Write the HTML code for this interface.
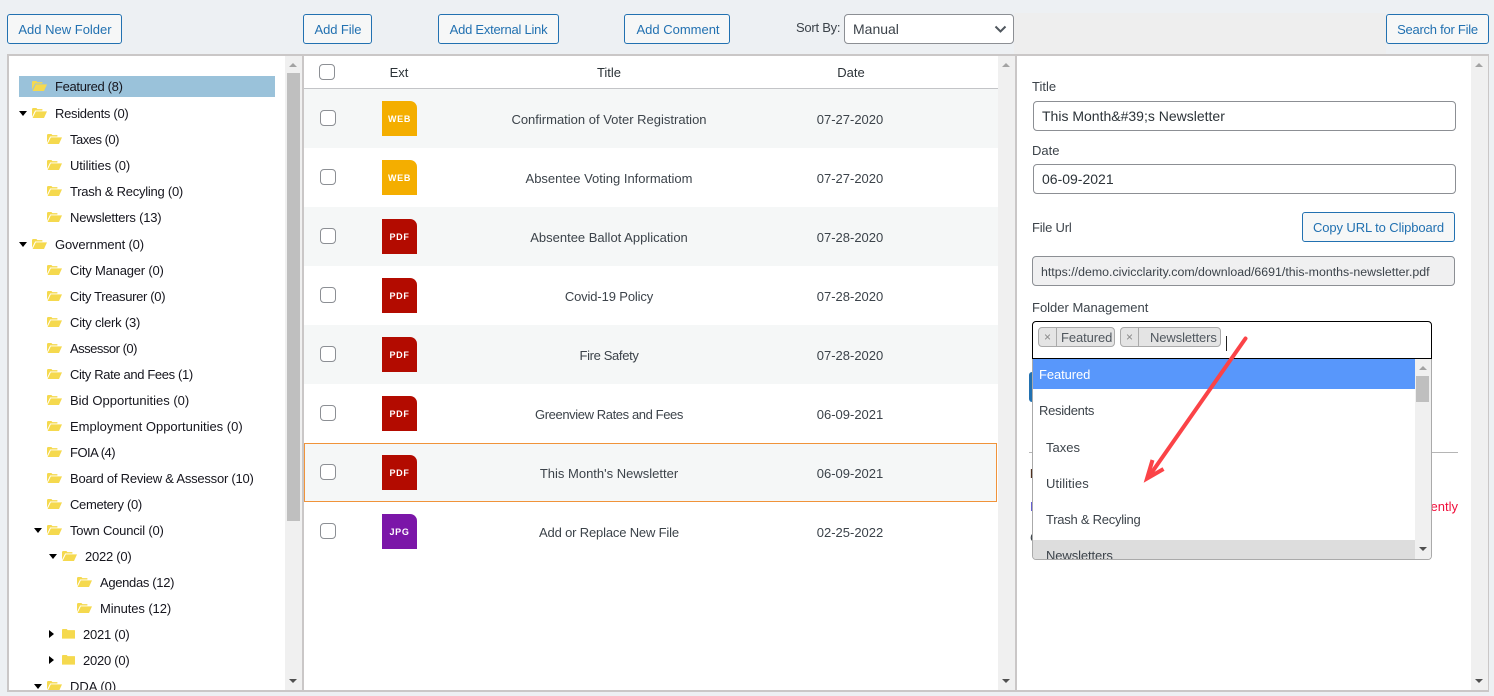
<!DOCTYPE html>
<html lang="en"><head><meta charset="utf-8"><title>File Manager</title>
<style>
html,body{margin:0;padding:0}
body{width:1494px;height:696px;position:relative;overflow:hidden;background:#edf0f3;font-family:"Liberation Sans",Arial,sans-serif;font-size:13px;color:#3c434a}
div,span,svg{position:absolute;box-sizing:border-box}
.t{white-space:nowrap;line-height:22px;height:20px}
.c{text-align:center}
.btn{height:30px;line-height:30px;border:1px solid #2271b1;border-radius:3px;background:#f6f7f7;color:#2271b1;text-align:center;white-space:nowrap}
.inp{background:#fff;border:1px solid #8c8f94;border-radius:4px;height:30px;line-height:28px;padding-left:8px;white-space:nowrap;font-size:14px}
.tree .t{color:#16161e}
.cb{width:16px;height:16px;background:#fff;border:1px solid #8c8f94;border-radius:4px}
.row{left:304px;width:694px;height:59px}
.ic{left:382px;width:35px;height:35px;border-top-right-radius:7px;color:#fff;font-weight:bold;font-size:9px;letter-spacing:.7px;line-height:37px;text-align:center}
.web{background:#f4ae00}.pdf{background:#b30b00}.jpg{background:#7b16a8}
.sb{background:#f0f0f0;width:17px}
.up{width:0;height:0;border-left:4px solid transparent;border-right:4px solid transparent;border-bottom:4px solid #a3a3a3}
.dn{width:0;height:0;border-left:4px solid transparent;border-right:4px solid transparent;border-top:4px solid #505050}
.cd{width:0;height:0;border-left:4px solid transparent;border-right:4px solid transparent;border-top:5px solid #000}
.cr{width:0;height:0;border-top:4px solid transparent;border-bottom:4px solid transparent;border-left:5px solid #000}
.f{width:15px;height:11px}
.tag{top:327px;height:20px;background:#e4e4e4;border:1px solid #aaa;border-radius:4px;color:#50575e}
.x{top:0;width:18px;height:18px;border-right:1px solid #aaa;color:#888;text-align:center;line-height:18px;font-size:12px}
</style></head><body>
<svg width="0" height="0" style="left:0;top:0"><defs>
<symbol id="o" viewBox="0 0 15 11"><path fill="#f5d94e" d="M0 9.9V1.9L.8 1h3.6l1 1.1h5v1.4H3.1L0 9.9zM3.8 4.4H15L12 11H.6z"/></symbol>
<symbol id="d" viewBox="0 0 15 11"><path fill="#f5d94e" d="M0 10.6V1.6L.7 1h4l1 1.1h7l.3.4v8.1z"/></symbol>
</defs></svg>

<div style="left:1014px;top:13px;width:372px;height:42px;background:#eee"></div>
<div class="btn" style="left:7px;top:14px;width:115px;padding-left:1px">Add New Folder</div>
<div class="btn" style="left:303px;top:14px;width:69px;letter-spacing:-.1px;padding-left:1px">Add File</div>
<div class="btn" style="left:438px;top:14px;width:121px;letter-spacing:-.25px">Add External Link</div>
<div class="btn" style="left:624px;top:14px;width:106px;padding-left:2px">Add Comment</div>
<div class="t" style="left:796px;top:17px;letter-spacing:-.25px">Sort By:</div>
<div class="inp" style="left:844px;top:14px;width:170px">Manual</div>
<svg style="left:994px;top:25px" width="13" height="9" viewBox="0 0 13 9"><path d="M1.5 1.5l5 5 5-5" fill="none" stroke="#50575e" stroke-width="2"/></svg>
<div class="btn" style="left:1386px;top:14px;width:103px;letter-spacing:-.25px">Search for File</div>

<div style="left:7px;top:54px;width:1482px;height:638px;background:#fff;border:2px solid #cac7c7"></div>
<div style="left:302px;top:55px;width:2px;height:636px;background:#cac7c7"></div>
<div style="left:1015px;top:55px;width:2px;height:636px;background:#cac7c7"></div>

<div class="sb" style="left:285px;top:56px;height:634px"></div>
<div style="left:287px;top:73px;width:13px;height:448px;background:#bfbfbf"></div>
<div class="up" style="left:289px;top:63px"></div><div class="dn" style="left:289px;top:679px"></div>
<div class="sb" style="left:998px;top:56px;height:634px"></div>
<div class="up" style="left:1002px;top:63px"></div><div class="dn" style="left:1002px;top:679px"></div>
<div class="sb" style="left:1471px;top:56px;height:634px"></div>
<div class="up" style="left:1475px;top:63px"></div><div class="dn" style="left:1475px;top:679px"></div>

<div class="tree" style="left:0;top:0;width:285px;height:690px;overflow:hidden">
<div style="left:19px;top:76px;width:256px;height:21px;background:#9ac2da"></div>
<svg class="f" style="left:32px;top:80px"><use href="#o"/></svg><div class="t" style="left:55px;top:76px;letter-spacing:-.33px">Featured (8)</div>
<div class="cd" style="left:19px;top:111px"></div><svg class="f" style="left:32px;top:107px"><use href="#o"/></svg><div class="t" style="left:55px;top:103px;letter-spacing:-.3px">Residents (0)</div>
<svg class="f" style="left:47px;top:133px"><use href="#o"/></svg><div class="t" style="left:70px;top:129px;letter-spacing:-.5px">Taxes (0)</div>
<svg class="f" style="left:47px;top:159px"><use href="#o"/></svg><div class="t" style="left:70px;top:155px;letter-spacing:-.1px">Utilities (0)</div>
<svg class="f" style="left:47px;top:185px"><use href="#o"/></svg><div class="t" style="left:70px;top:181px;letter-spacing:-.25px">Trash &amp; Recyling (0)</div>
<svg class="f" style="left:47px;top:211px"><use href="#o"/></svg><div class="t" style="left:70px;top:207px;letter-spacing:-.2px">Newsletters (13)</div>
<div class="cd" style="left:19px;top:242px"></div><svg class="f" style="left:32px;top:238px"><use href="#o"/></svg><div class="t" style="left:55px;top:234px;letter-spacing:-.15px">Government (0)</div>
<svg class="f" style="left:47px;top:264px"><use href="#o"/></svg><div class="t" style="left:70px;top:260px;letter-spacing:-.2px">City Manager (0)</div>
<svg class="f" style="left:47px;top:290px"><use href="#o"/></svg><div class="t" style="left:70px;top:286px;letter-spacing:-.33px">City Treasurer (0)</div>
<svg class="f" style="left:47px;top:316px"><use href="#o"/></svg><div class="t" style="left:70px;top:312px;letter-spacing:-.2px">City clerk (3)</div>
<svg class="f" style="left:47px;top:342px"><use href="#o"/></svg><div class="t" style="left:70px;top:338px;letter-spacing:-.5px">Assessor (0)</div>
<svg class="f" style="left:47px;top:368px"><use href="#o"/></svg><div class="t" style="left:70px;top:364px;letter-spacing:-.36px">City Rate and Fees (1)</div>
<svg class="f" style="left:47px;top:394px"><use href="#o"/></svg><div class="t" style="left:70px;top:390px">Bid Opportunities (0)</div>
<svg class="f" style="left:47px;top:420px"><use href="#o"/></svg><div class="t" style="left:70px;top:416px">Employment Opportunities (0)</div>
<svg class="f" style="left:47px;top:446px"><use href="#o"/></svg><div class="t" style="left:70px;top:442px;letter-spacing:-.5px">FOIA (4)</div>
<svg class="f" style="left:47px;top:472px"><use href="#o"/></svg><div class="t" style="left:70px;top:468px;letter-spacing:-.23px">Board of Review &amp; Assessor (10)</div>
<svg class="f" style="left:47px;top:498px"><use href="#o"/></svg><div class="t" style="left:70px;top:494px;letter-spacing:-.33px">Cemetery (0)</div>
<div class="cd" style="left:34px;top:528px"></div><svg class="f" style="left:47px;top:524px"><use href="#o"/></svg><div class="t" style="left:70px;top:520px;letter-spacing:-.2px">Town Council (0)</div>
<div class="cd" style="left:49px;top:554px"></div><svg class="f" style="left:62px;top:550px"><use href="#o"/></svg><div class="t" style="left:85px;top:546px;letter-spacing:-.25px">2022 (0)</div>
<svg class="f" style="left:77px;top:576px"><use href="#o"/></svg><div class="t" style="left:100px;top:572px;letter-spacing:-.33px">Agendas (12)</div>
<svg class="f" style="left:77px;top:602px"><use href="#o"/></svg><div class="t" style="left:100px;top:598px;letter-spacing:-.1px">Minutes (12)</div>
<div class="cr" style="left:49px;top:630px"></div><svg class="f" style="left:62px;top:628px"><use href="#d"/></svg><div class="t" style="left:83px;top:624px;letter-spacing:-.25px">2021 (0)</div>
<div class="cr" style="left:49px;top:656px"></div><svg class="f" style="left:62px;top:654px"><use href="#d"/></svg><div class="t" style="left:83px;top:650px;letter-spacing:-.25px">2020 (0)</div>
<div class="cd" style="left:34px;top:684px"></div><svg class="f" style="left:47px;top:680px"><use href="#o"/></svg><div class="t" style="left:70px;top:676px">DDA (0)</div>
</div>

<div class="cb" style="left:319px;top:64px"></div>
<div class="t c" style="left:369px;top:62px;width:60px;color:#2c3338">Ext</div>
<div class="t c" style="left:509px;top:62px;width:200px;color:#2c3338">Title</div>
<div class="t c" style="left:801px;top:62px;width:100px;color:#2c3338">Date</div>
<div style="left:304px;top:88px;width:694px;height:1px;background:#c3c4c7"></div>

<div class="row" style="top:89px;background:#f5f7f7"></div>
<div class="row" style="top:207px;background:#f5f7f7"></div>
<div class="row" style="top:325px;background:#f5f7f7"></div>
<div class="row" style="top:443px;height:59px;width:693px;background:#f5f7f7;border:1px solid #f0933a"></div>

<div class="cb" style="left:320px;top:110px"></div><div class="ic web" style="top:101px">WEB</div>
<div class="t c" style="left:409px;top:109px;width:400px">Confirmation of Voter Registration</div><div class="t c" style="left:790px;top:109px;width:120px">07-27-2020</div>
<div class="cb" style="left:320px;top:169px"></div><div class="ic web" style="top:160px">WEB</div>
<div class="t c" style="left:409px;top:168px;width:400px">Absentee Voting Informatiom</div><div class="t c" style="left:790px;top:168px;width:120px">07-27-2020</div>
<div class="cb" style="left:320px;top:228px"></div><div class="ic pdf" style="top:219px">PDF</div>
<div class="t c" style="left:409px;top:227px;width:400px">Absentee Ballot Application</div><div class="t c" style="left:790px;top:227px;width:120px">07-28-2020</div>
<div class="cb" style="left:320px;top:287px"></div><div class="ic pdf" style="top:278px">PDF</div>
<div class="t c" style="left:409px;top:286px;width:400px;letter-spacing:-.13px">Covid-19 Policy</div><div class="t c" style="left:790px;top:286px;width:120px">07-28-2020</div>
<div class="cb" style="left:320px;top:346px"></div><div class="ic pdf" style="top:337px">PDF</div>
<div class="t c" style="left:409px;top:345px;width:400px;letter-spacing:-.35px">Fire Safety</div><div class="t c" style="left:790px;top:345px;width:120px">07-28-2020</div>
<div class="cb" style="left:320px;top:405px"></div><div class="ic pdf" style="top:396px">PDF</div>
<div class="t c" style="left:409px;top:404px;width:400px;letter-spacing:-.4px">Greenview Rates and Fees</div><div class="t c" style="left:790px;top:404px;width:120px">06-09-2021</div>
<div class="cb" style="left:320px;top:464px"></div><div class="ic pdf" style="top:455px">PDF</div>
<div class="t c" style="left:409px;top:463px;width:400px">This Month's Newsletter</div><div class="t c" style="left:790px;top:463px;width:120px">06-09-2021</div>
<div class="cb" style="left:320px;top:523px"></div><div class="ic jpg" style="top:514px">JPG</div>
<div class="t c" style="left:409px;top:522px;width:400px;letter-spacing:-.17px">Add or Replace New File</div><div class="t c" style="left:790px;top:522px;width:120px">02-25-2022</div>

<div class="t" style="left:1032px;top:76px">Title</div>
<div class="inp" style="left:1033px;top:101px;width:423px;color:#2c3338">This Month&amp;#39;s Newsletter</div>
<div class="t" style="left:1032px;top:140px">Date</div>
<div class="inp" style="left:1033px;top:164px;width:423px;color:#2c3338">06-09-2021</div>
<div class="t" style="left:1032px;top:217px;letter-spacing:-.2px">File Url</div>
<div class="btn" style="left:1302px;top:212px;width:153px;letter-spacing:-.1px">Copy URL to Clipboard</div>
<div class="inp" style="left:1032px;top:256px;width:423px;background:#f0f0f1;font-size:12.36px;line-height:30px">https://demo.civicclarity.com/download/6691/this-months-newsletter.pdf</div>
<div class="t" style="left:1032px;top:297px">Folder Management</div>

<div style="left:1029px;top:372px;width:30px;height:30px;background:#2271b1;border-radius:3px"></div>
<div style="left:1029px;top:452px;width:429px;height:1px;background:#b5b5b5"></div>
<div class="t" style="left:1030px;top:463px;font-weight:bold;color:#50301f">F</div>
<div class="t" style="left:1030px;top:496px;color:#5b55d0">F</div>
<div class="t" style="left:1420px;top:496px;width:38px;text-align:right;color:#f0103c">ently</div>
<div class="t" style="left:1030px;top:527px">C</div>

<div style="left:1032px;top:321px;width:400px;height:38px;background:#fff;border:1px solid #000;border-radius:4px 4px 0 0"></div>
<div class="tag" style="left:1038px;width:77px"><span class="x" style="left:0">×</span><span class="t" style="left:22px;top:-1px;letter-spacing:-.1px">Featured</span></div>
<div class="tag" style="left:1120px;width:101px"><span class="x" style="left:0">×</span><span class="t" style="left:29px;top:-1px;letter-spacing:-.1px">Newsletters</span></div>
<div style="left:1226px;top:336px;width:1px;height:15px;background:#222"></div>

<div style="left:1032px;top:359px;width:400px;height:201px;background:#fff;border:1px solid #aaa;border-top:0;border-radius:0 0 4px 4px;overflow:hidden">
<div style="left:0;top:0;width:382px;height:30px;background:#5897fb"></div>
<div style="left:0;top:181px;width:382px;height:20px;background:#ddd"></div>
<div class="t" style="left:6px;top:5px;color:#fff;letter-spacing:-.1px">Featured</div>
<div class="t" style="left:6px;top:41px;letter-spacing:-.3px">Residents</div>
<div class="t" style="left:13px;top:78px">Taxes</div>
<div class="t" style="left:13px;top:114px;letter-spacing:.1px">Utilities</div>
<div class="t" style="left:13px;top:150px;letter-spacing:-.25px">Trash &amp; Recyling</div>
<div class="t" style="left:13px;top:186px;letter-spacing:-.1px">Newsletters</div>
<div class="sb" style="left:382px;top:0;height:201px"></div>
<div style="left:383px;top:17px;width:13px;height:26px;background:#bfbfbf"></div>
<div class="up" style="left:386px;top:7px"></div><div class="dn" style="left:386px;top:188px"></div>
</div>

<svg style="left:1130px;top:330px" width="125" height="160" viewBox="1130 330 125 160">
<path d="M1245.5 338.5L1150 475" fill="none" stroke="#fb4347" stroke-width="4" stroke-linecap="round"/>
<path d="M1152.5 460L1147 478.5L1163.5 469" fill="none" stroke="#fb4347" stroke-width="4" stroke-linejoin="miter"/>
</svg>
</body></html>
